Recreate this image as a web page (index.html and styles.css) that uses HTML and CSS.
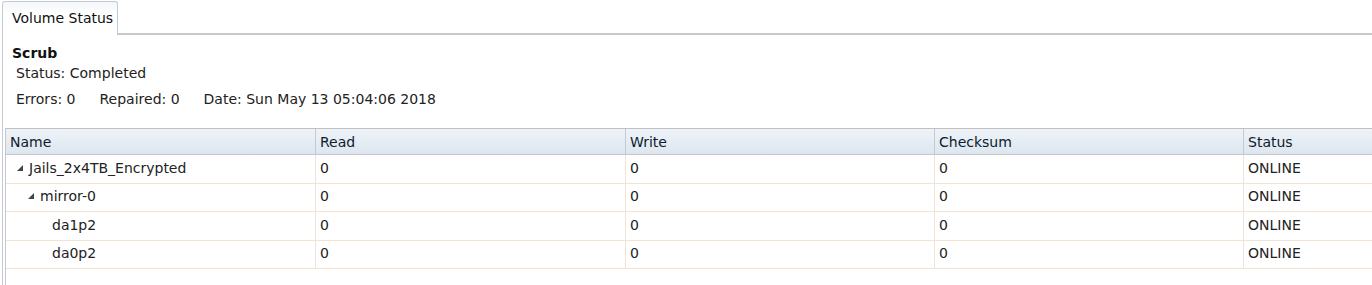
FILE: index.html
```html
<!DOCTYPE html>
<html lang="en">

<head>
    <meta charset="UTF-8">
    <title>Volume Status</title>
    <link rel="stylesheet" href="styles.css">
</head>

<body>
    <div class="tab-bar">
        <div class="tab">Volume Status</div>
        <div class="tab-fill"></div>
    </div>

    <div class="panel">
        <div class="scrub">
            <div class="scrub-title">Scrub</div>
            <div class="scrub-status">Status: Completed</div>
            <div class="scrub-info">
                <span>Errors: 0</span>
                <span>Repaired: 0</span>
                <span>Date: Sun May 13 05:04:06 2018</span>
            </div>
        </div>

        <div class="grid">
            <div class="grid-row grid-head">
                <div class="cell">Name</div>
                <div class="cell">Read</div>
                <div class="cell">Write</div>
                <div class="cell">Checksum</div>
                <div class="cell">Status</div>
            </div>
            <div class="grid-row">
                <div class="cell name level-1"><span class="arrow"></span>Jails_2x4TB_Encrypted</div>
                <div class="cell">0</div>
                <div class="cell">0</div>
                <div class="cell">0</div>
                <div class="cell">ONLINE</div>
            </div>
            <div class="grid-row">
                <div class="cell name level-2"><span class="arrow"></span>mirror-0</div>
                <div class="cell">0</div>
                <div class="cell">0</div>
                <div class="cell">0</div>
                <div class="cell">ONLINE</div>
            </div>
            <div class="grid-row">
                <div class="cell name level-3">da1p2</div>
                <div class="cell">0</div>
                <div class="cell">0</div>
                <div class="cell">0</div>
                <div class="cell">ONLINE</div>
            </div>
            <div class="grid-row">
                <div class="cell name level-3">da0p2</div>
                <div class="cell">0</div>
                <div class="cell">0</div>
                <div class="cell">0</div>
                <div class="cell">ONLINE</div>
            </div>
        </div>
    </div>
</body>

</html>
```

FILE: styles.css
```css
html,
body {
    height: 100%;
    overflow: hidden;
}

body {
    margin: 0;
    font-family: 'DejaVu Sans', Verdana, sans-serif;
    font-size: 14px;
    color: #222;
    background-color: #fff;
}

/* Tabs */
.tab-bar {
    display: flex;
    height: 35px;
    padding: 1px 0 0 2px;
    box-sizing: border-box;
}

.tab {
    width: 116px;
    padding: 0 0 0 9px;
    box-sizing: border-box;
    line-height: 33px;
    color: #111;
    border: 1px solid #c2cad4;
    border-bottom: none;
    border-radius: 3px 3px 0 0;
    background: linear-gradient(#f4f7fa, #ffffff 40%);
}

.tab-fill {
    flex: 1;
    border-bottom: 2px solid #c4c7cc;
}

/* Panel */
.panel {
    margin-left: 2px;
    border-left: 1px solid #c2cad4;
    height: 250px;
    padding-left: 2px;
    overflow: hidden;
}

.scrub {
    padding: 9px 0 0 7px;
    height: 93px;
    box-sizing: border-box;
}

.scrub-title {
    font-weight: bold;
    line-height: 18px;
    color: #111;
}

.scrub-status {
    padding-left: 4px;
    line-height: 22px;
}

.scrub-info {
    display: flex;
    gap: 24px;
    padding: 5px 0 0 4px;
    line-height: 20px;
}

/* Grid */
.grid {
    border-left: 1px solid #c5c9cf;
    border-top: 1px solid #c0c0c0;
    height: 157px;
    overflow: hidden;
}

.grid-row {
    display: grid;
    grid-template-columns: 310px 310px 309px 309px 310px;
    height: 28.5px;
    border-bottom: 1px solid #f3e3d3;
    box-sizing: border-box;
}

.grid-head {
    height: 26px;
    color: #0e1b2e;
    background: linear-gradient(#eef3f8, #dde6ef);
    border-bottom: 1px solid #c3c7cc;
}

.cell {
    display: flex;
    align-items: center;
    padding: 0 0 2px 4px;
    border-right: 1px solid #f1e2d3;
    white-space: nowrap;
}

.grid-head .cell {
    padding-bottom: 0;
    border-right: 1px solid #c3cad3;
}

.arrow {
    width: 0;
    height: 0;
    margin-right: 6px;
    border-left: 6px solid transparent;
    border-bottom: 6px solid #444;
}

.level-1 {
    padding-left: 11px;
}

.level-2 {
    padding-left: 22px;
}

.level-3 {
    padding-left: 46px;
}
```
